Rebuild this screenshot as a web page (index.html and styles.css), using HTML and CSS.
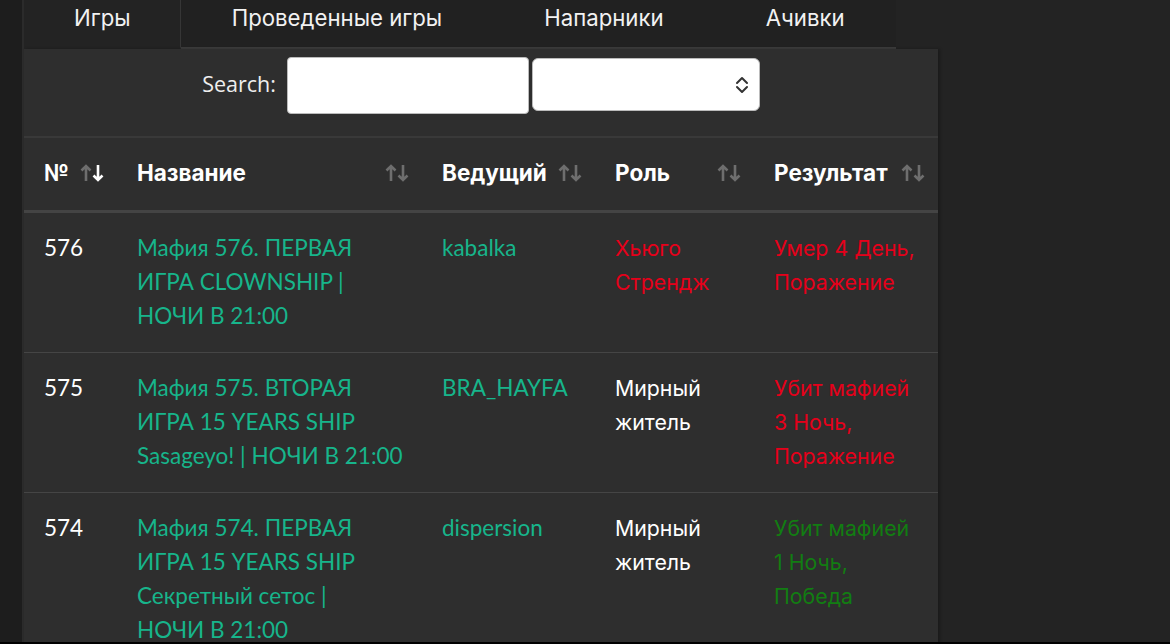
FILE: index.html
```html
<!DOCTYPE html>
<html lang="ru">
<head>
<meta charset="utf-8">
<title>Игры</title>
<link rel="stylesheet" href="styles.css">
</head>
<body>
<div class="layout">
  <aside class="side"></aside>
  <main class="main">
    <nav class="tabs">
      <a class="tab active">Игры</a>
      <a class="tab">Проведенные игры</a>
      <a class="tab">Напарники</a>
      <a class="tab">Ачивки</a>
    </nav>
    <section class="panel">
      <div class="search">
        <label class="search-label">Search:</label>
        <input class="search-input" type="text">
        <div class="select">
          <svg class="chev" width="14" height="20" viewBox="0 0 14 20"><path d="M2 8 L7 3 L12 8 M2 12 L7 17 L12 12" fill="none" stroke="#333" stroke-width="2" stroke-linecap="round" stroke-linejoin="round"/></svg>
        </div>
      </div>
      <table class="grid">
        <colgroup>
          <col class="c1"><col class="c2"><col class="c3"><col class="c4"><col class="c5">
        </colgroup>
        <thead>
          <tr>
            <th><div class="th"><span>№</span><svg class="sort" width="25" height="20" viewBox="0 0 25 20"><path d="M6 18 V3 M1.5 7.5 L6 3 L10.5 7.5" fill="none" stroke="#6e6e6e" stroke-width="2.6"/><path d="M18 2 V17 M13.5 12.5 L18 17 L22.5 12.5" fill="none" stroke="#fff" stroke-width="2.6"/></svg></div></th>
            <th><div class="th"><span>Название</span><svg class="sort" width="25" height="20" viewBox="0 0 25 20"><path d="M6 18 V3 M1.5 7.5 L6 3 L10.5 7.5 M18 2 V17 M13.5 12.5 L18 17 L22.5 12.5" fill="none" stroke="#6e6e6e" stroke-width="2.6"/></svg></div></th>
            <th><div class="th"><span>Ведущий</span><svg class="sort" width="25" height="20" viewBox="0 0 25 20"><path d="M6 18 V3 M1.5 7.5 L6 3 L10.5 7.5 M18 2 V17 M13.5 12.5 L18 17 L22.5 12.5" fill="none" stroke="#6e6e6e" stroke-width="2.6"/></svg></div></th>
            <th><div class="th"><span>Роль</span><svg class="sort" width="25" height="20" viewBox="0 0 25 20"><path d="M6 18 V3 M1.5 7.5 L6 3 L10.5 7.5 M18 2 V17 M13.5 12.5 L18 17 L22.5 12.5" fill="none" stroke="#6e6e6e" stroke-width="2.6"/></svg></div></th>
            <th><div class="th"><span>Результат</span><svg class="sort" width="25" height="20" viewBox="0 0 25 20"><path d="M6 18 V3 M1.5 7.5 L6 3 L10.5 7.5 M18 2 V17 M13.5 12.5 L18 17 L22.5 12.5" fill="none" stroke="#6e6e6e" stroke-width="2.6"/></svg></div></th>
          </tr>
        </thead>
        <tbody>
          <tr>
            <td class="num">576</td>
            <td><a class="link">Мафия 576. ПЕРВАЯ<br>ИГРА CLOWNSHIP |<br>НОЧИ В 21:00</a></td>
            <td><a class="link">kabalka</a></td>
            <td class="sf red">Хьюго<br>Стрендж</td>
            <td class="sf red">Умер 4 День,<br>Поражение</td>
          </tr>
          <tr>
            <td class="num">575</td>
            <td><a class="link">Мафия 575. ВТОРАЯ<br>ИГРА 15 YEARS SHIP<br>Sasageyo! | НОЧИ В 21:00</a></td>
            <td><a class="link">BRA_HAYFA</a></td>
            <td class="sf">Мирный<br>житель</td>
            <td class="sf red">Убит мафией<br>3 Ночь,<br>Поражение</td>
          </tr>
          <tr>
            <td class="num">574</td>
            <td><a class="link">Мафия 574. ПЕРВАЯ<br>ИГРА 15 YEARS SHIP<br>Секретный сетос |<br>НОЧИ В 21:00</a></td>
            <td><a class="link">dispersion</a></td>
            <td class="sf">Мирный<br>житель</td>
            <td class="sf green">Убит мафией<br>1 Ночь,<br>Победа</td>
          </tr>
        </tbody>
      </table>
    </section>
  </main>
</div>
<div class="bottom-line"></div>
</body>
</html>
```
FILE: styles.css
```css
html, body {
  margin: 0;
  padding: 0;
  height: 100%;
  overflow: hidden;
}
body {
  background: #232323;
  color: #fff;
  font-family: Inter, "Noto Sans", sans-serif;
}
.layout {
  display: flex;
  min-height: 100%;
}
.side {
  width: 22px;
  flex: none;
  background: #1d1d1d;
  border-right: 2px solid #2b2b2b;
}
.main {
  width: 914px;
  display: flex;
  flex-direction: column;
}
.tabs {
  display: flex;
  height: 49px;
}
.tab {
  padding: 0 51px;
  font-size: 22.2px;
  color: #f2f2f2;
  line-height: 36px;
  height: 47px;
  border-bottom: 2px solid #3c3c3c;
  background: #212121;
  white-space: nowrap;
}
.tab.active {
  background: #232323;
  border-bottom-color: transparent;
  border-right: 1px solid #363636;
  padding-left: 50px;
  padding-right: 49px;
}
.panel {
  flex: 1;
  background: #2e2e2e;
  box-shadow: 2px 0 3px rgba(0,0,0,0.25);
}
.search {
  display: flex;
  justify-content: center;
  align-items: flex-start;
  padding-top: 8px;
  border-bottom: 2px solid #393939;
  box-sizing: border-box;
  height: 89px;
}
.search-label {
  font-family: "Open Sans", sans-serif;
  font-size: 21.5px;
  color: #eee;
  margin-right: 11px;
  line-height: 54px;
}
.search-input {
  width: 242px;
  height: 57px;
  box-sizing: border-box;
  border: 1px solid #bbb;
  border-radius: 4px;
  background: #fff;
  margin: 0;
  padding: 0;
}
.select {
  width: 228px;
  height: 53px;
  margin-left: 3px;
  margin-top: 1px;
  box-sizing: border-box;
  border: 1px solid #bbb;
  border-radius: 6px;
  background: #fff;
  display: flex;
  align-items: center;
  justify-content: flex-end;
  padding-right: 10px;
}
.grid {
  width: 914px;
  border-collapse: collapse;
  table-layout: fixed;
}
.c1 { width: 93px; }
.c2 { width: 305px; }
.c3 { width: 173px; }
.c4 { width: 159px; }
.c5 { width: 184px; }
th {
  height: 73px;
  padding: 0 12px 2px 20px;
  box-sizing: border-box;
  border-bottom: 3px solid #444;
  text-align: left;
  font-family: Inter, sans-serif;
  font-weight: 700;
  font-size: 22.5px;
  color: #fff;
}
.th {
  display: flex;
  align-items: center;
  justify-content: space-between;
}
.th span { white-space: nowrap; }
.sort { flex: none; margin-top: 0; }
td {
  vertical-align: top;
  padding: 18px 4px 19px 20px;
  font-family: Lato, sans-serif;
  font-size: 22.5px;
  line-height: 34px;
  color: #fff;
  border-bottom: 1px solid #454545;
  white-space: nowrap;
}
.link { color: #17b58b; }
td.sf { font-family: Inter, sans-serif; font-size: 21.3px; }
.red { color: #e6001a; }
.green { color: #127d12; }
.bottom-line {
  position: fixed;
  left: 0;
  right: 0;
  bottom: 0;
  height: 2px;
  background: #000;
}
```
